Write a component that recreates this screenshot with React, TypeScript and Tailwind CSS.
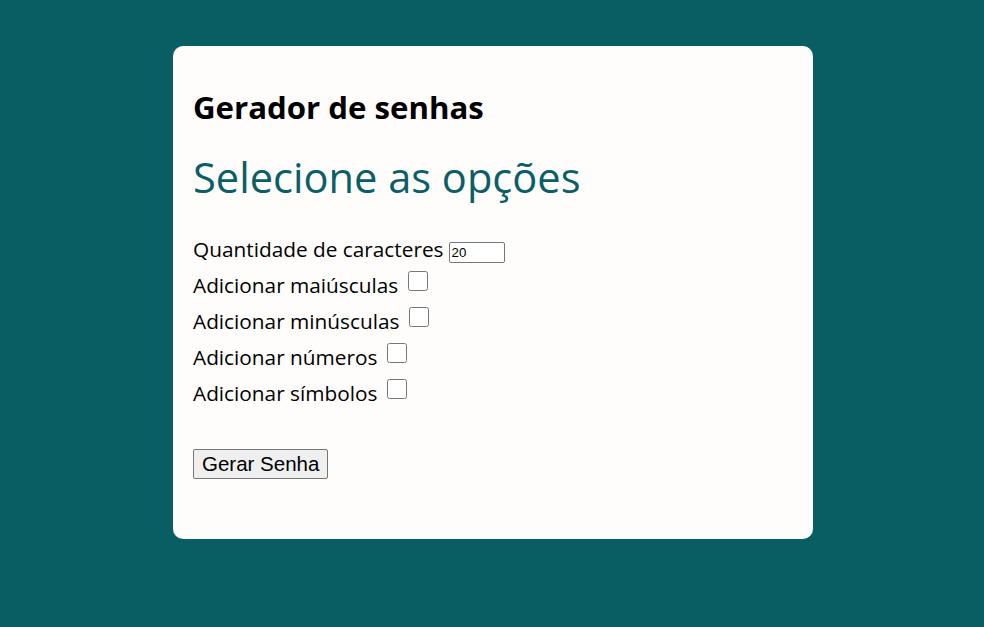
const options = [
  'Adicionar maiúsculas',
  'Adicionar minúsculas',
  'Adicionar números',
  'Adicionar símbolos',
]

export default function App() {
  return (
    <div className="min-h-[627px] bg-[#085e63] pt-[46px] font-['Open_Sans',sans-serif]">
      <div className="ml-[173px] w-[640px] h-[493px] rounded-[10px] bg-[#fffdfb] px-5 pt-[39px]">
        <h1 className="text-[31.2px] font-bold leading-[44px] text-black">
          Gerador de senhas
        </h1>
        <h2 className="mt-5 text-[41.6px] leading-[57px] text-[#0b5e66]">
          Selecione as opções
        </h2>

        <div className="mt-[25px] text-[20.8px] text-black">
          <div className="flex h-9 items-start">
            <span className="leading-9">Quantidade de caracteres</span>
            <input
              type="number"
              defaultValue={20}
              className="ml-[5px] mt-[11px] h-[21px] w-[56px] rounded-[2px] border border-[#767676] bg-white px-[2px] font-['Liberation_Sans',sans-serif] text-[13.3px] leading-[19px]"
            />
          </div>
          {options.map((label) => (
            <div key={label} className="flex h-9 items-start">
              <span className="leading-9">{label}</span>
              <input type="checkbox" className="ml-[10px] mt-1 h-5 w-5" />
            </div>
          ))}
        </div>

        <button className="mt-[38px] h-[30px] rounded-[2px] border border-[#767676] bg-[#efefef] px-[8px] font-['Liberation_Sans',sans-serif] text-[20.5px] leading-[26px] text-black">
          Gerar Senha
        </button>
      </div>
    </div>
  )
}
